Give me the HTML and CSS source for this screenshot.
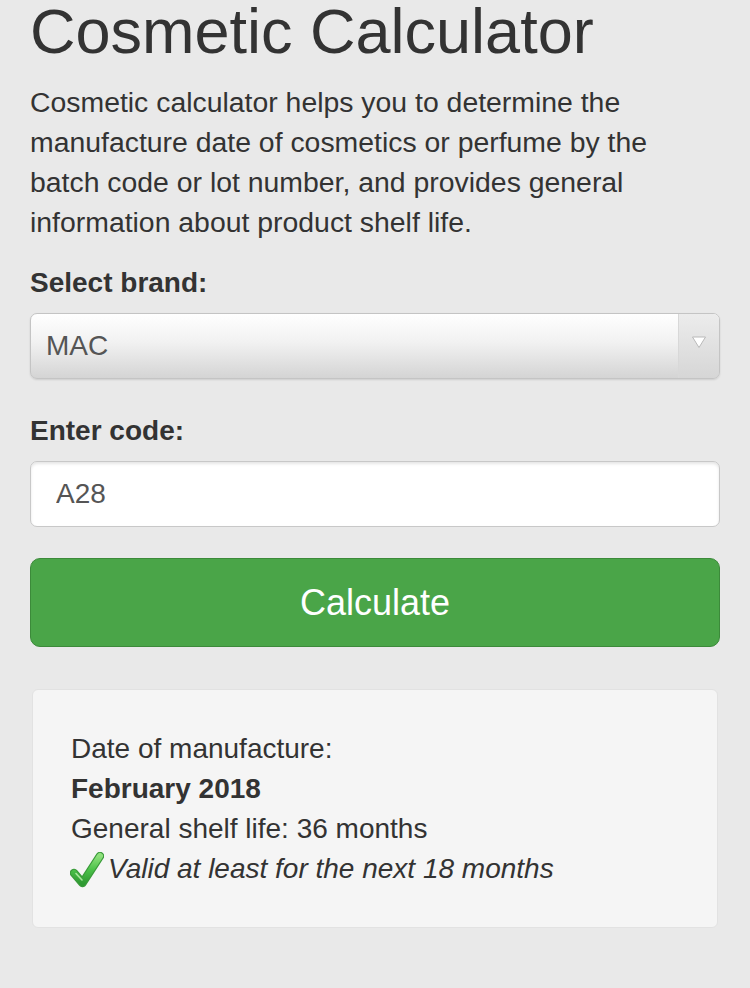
FILE: index.html
```html
<!DOCTYPE html>
<html lang="en">

<head>
    <meta charset="UTF-8">
    <meta name="viewport" content="width=device-width, initial-scale=1.0">
    <title>Cosmetic Calculator</title>
    <link rel="stylesheet" href="styles.css">
</head>

<body>
    <div class="container">
        <h1>Cosmetic Calculator</h1>
        <p class="intro">Cosmetic calculator helps you to determine the manufacture date of cosmetics or perfume by the
            batch code or lot number, and provides general information about product shelf life.</p>

        <form action="" onsubmit="return false">
            <label class="label" for="brand">Select brand:</label>
            <div class="select">
                <span class="select-value" id="brand">MAC</span>
                <span class="select-arrow">
                    <svg width="16" height="14" viewBox="0 0 16 14">
                        <path d="M1.5 2 L14.5 2 L8 12.5 Z" fill="#fff" stroke="#b9b9b9" stroke-width="1" />
                    </svg>
                </span>
            </div>

            <label class="label code-label" for="code">Enter code:</label>
            <input type="text" id="code" value="A28">

            <button type="submit" class="btn">Calculate</button>
        </form>

        <div class="result">
            <p>Date of manufacture:</p>
            <p class="date">February 2018</p>
            <p>General shelf life: 36 months</p>
            <p class="valid">
                <svg class="check" width="34" height="36" viewBox="0 0 34 36">
                    <defs>
                        <linearGradient id="ck" x1="0" y1="0" x2="0" y2="1">
                            <stop offset="0" stop-color="#8ee07c" />
                            <stop offset="0.5" stop-color="#4cc24a" />
                            <stop offset="1" stop-color="#2f9a32" />
                        </linearGradient>
                    </defs>
                    <path d="M4 21 L12.5 31 L30 4" fill="none" stroke="#3a9a3a" stroke-width="8.5"
                        stroke-linecap="round" stroke-linejoin="round" />
                    <path d="M4 21 L12.5 31 L30 4" fill="none" stroke="url(#ck)" stroke-width="6"
                        stroke-linecap="round" stroke-linejoin="round" />
                    <path d="M6 21.5 L12 28" fill="none" stroke="#c4f4b4" stroke-width="1.6"
                        stroke-linecap="round" opacity="0.8" />
                </svg>
                <em>Valid at least for the next 18 months</em>
            </p>
        </div>
    </div>
</body>

</html>
```

FILE: styles.css
```css
* {
    margin: 0;
    padding: 0;
    box-sizing: border-box;
}

body {
    background-color: #e9e9e9;
    color: #333333;
    font-family: "Liberation Sans", Arial, sans-serif;
}

.container {
    padding: 0 30px 60px;
}

h1 {
    font-size: 63px;
    font-weight: normal;
    line-height: 62px;
    color: #333333;
}

.intro {
    margin-top: 20px;
    font-size: 28.4px;
    line-height: 40px;
    padding-right: 4px;
}

form {
    display: flex;
    flex-direction: column;
}

.label {
    display: block;
    margin-top: 21px;
    font-size: 28px;
    font-weight: bold;
    line-height: 40px;
}

.code-label {
    margin-top: 32px;
}

.select {
    display: flex;
    margin-top: 10px;
    height: 66px;
    border: 1px solid #c4c4c4;
    border-radius: 7px;
    background-image: linear-gradient(#ffffff 0%, #f1f1f1 45%, #d4d4d4 100%);
    box-shadow: 0 1px 2px rgba(0, 0, 0, 0.12);
    overflow: hidden;
}

.select-value {
    flex: 1;
    padding-left: 15px;
    font-size: 28px;
    line-height: 64px;
    color: #555555;
}

.select-arrow {
    width: 41px;
    display: flex;
    align-items: center;
    justify-content: center;
    border-left: 1px solid #d8d8d8;
    background-image: linear-gradient(#ececec, #d6d6d6);
    padding-bottom: 8px;
}

input[type="text"] {
    margin-top: 10px;
    height: 66px;
    padding: 0 25px;
    border: 1px solid #c8c8c8;
    border-radius: 7px;
    background-color: #ffffff;
    box-shadow: inset 0 2px 3px rgba(0, 0, 0, 0.1);
    font-family: "Liberation Sans", Arial, sans-serif;
    font-size: 28px;
    color: #555555;
    outline: none;
}

.btn {
    margin-top: 31px;
    height: 89px;
    border: 1px solid #3c8a3a;
    border-radius: 10px;
    background-color: #4aa548;
    color: #ffffff;
    font-family: "Liberation Sans", Arial, sans-serif;
    font-size: 36px;
    cursor: pointer;
}

.result {
    margin: 42px 2px 0;
    padding: 39px 38px 38px;
    background-color: #f5f5f5;
    border: 1px solid #e2e2e2;
    border-radius: 6px;
    font-size: 28px;
    line-height: 40px;
}

.result .date {
    font-weight: bold;
}

.valid {
    display: flex;
    align-items: center;
}

.check {
    flex-shrink: 0;
    margin: 2px 4px 0 -1px;
}

.valid em {
    font-style: italic;
}
```
